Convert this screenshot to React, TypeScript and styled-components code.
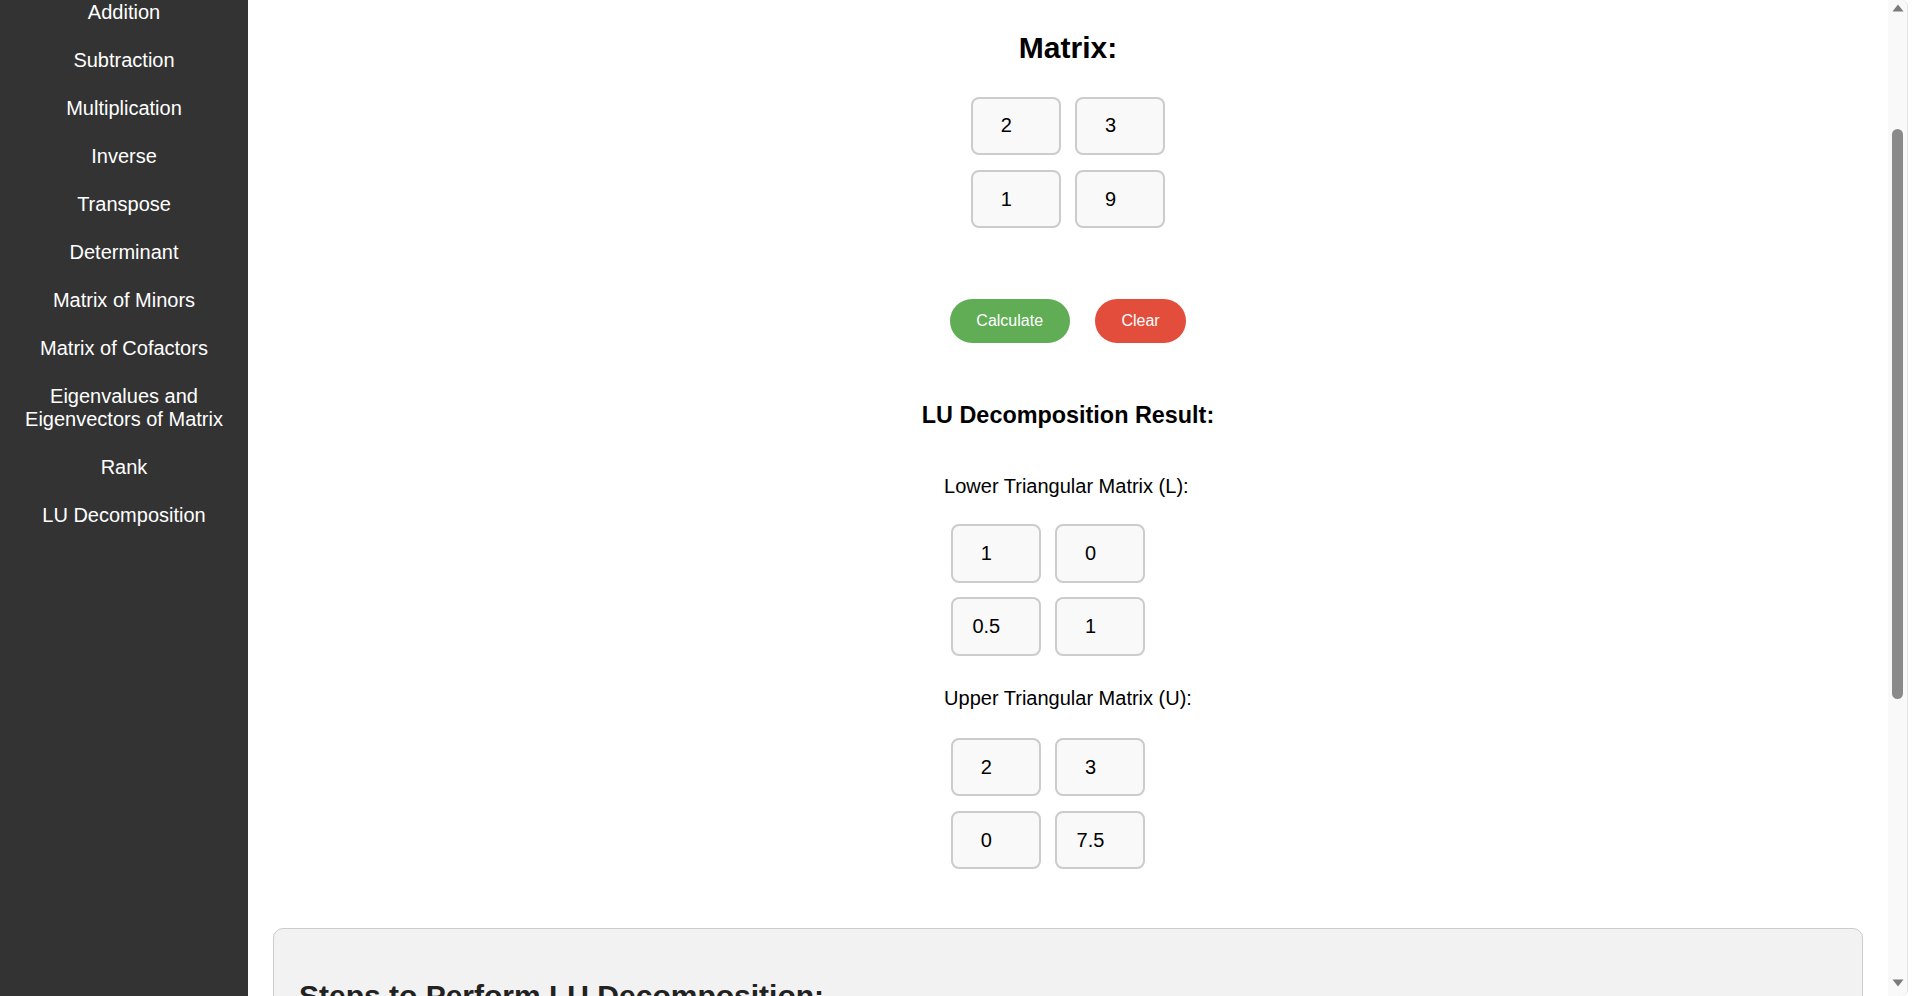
import React, { useLayoutEffect } from "react";
import styled, { createGlobalStyle } from "styled-components";

const GlobalStyle = createGlobalStyle`
  html, body {
    margin: 0;
    padding: 0;
  }
  body {
    font-family: "Liberation Sans", Arial, sans-serif;
    font-size: 20px;
    color: #000;
    background: #fff;
  }
`;

const Page = styled.div`
  display: flex;
  align-items: stretch;
  min-height: 100vh;
  padding-right: 17px;
`;

const Sidebar = styled.nav`
  width: 248px;
  flex-shrink: 0;
  background: #333;
  color: #fff;
  text-align: center;
`;

const SidebarTitle = styled.div`
  padding: 30px 10px;
  font-size: 26px;
  font-weight: bold;
  line-height: 30px;
`;

const NavList = styled.ul`
  list-style: none;
  margin: 0;
  padding: 0;
`;

const NavItem = styled.li`
  padding: 12.5px 10px;
  line-height: 23px;
`;

const NavLink = styled.a`
  color: #fff;
  text-decoration: none;
`;

const Main = styled.main`
  flex: 1;
  min-width: 0;
  padding: 0 32px 30px 25px;
  display: flex;
  flex-direction: column;
  align-items: center;
`;

const PageTitle = styled.h1`
  margin: 40px 0 0;
  font-size: 40px;
  line-height: 46px;
  text-align: center;
`;

const Lead = styled.p<{ $top: number }>`
  margin: ${(p) => p.$top}px 0 0;
  line-height: 23px;
  text-align: center;
  color: #333;
`;

const SectionTitle = styled.h2`
  margin: 66.7px 0 0;
  font-size: 30px;
  line-height: 34.5px;
  font-weight: bold;
`;

const Grid = styled.div<{ $top: number; $inset?: boolean }>`
  display: grid;
  grid-template-columns: repeat(2, 89.5px);
  gap: 14.8px 14.7px;
  margin-top: ${(p) => p.$top}px;
  padding-left: ${(p) => (p.$inset ? 7 : 0)}px;
`;

const Cell = styled.input`
  box-sizing: border-box;
  width: 89.5px;
  height: 58.4px;
  margin: 0;
  padding: 0 10px 0 6px;
  border: 2px solid #ccc;
  border-radius: 8px;
  background: #f9f9f9;
  font-family: "Liberation Sans", Arial, sans-serif;
  font-size: 20px;
  color: #000;
  text-align: center;
  outline: none;
`;

const ButtonRow = styled.div`
  display: flex;
  gap: 25px;
  margin-top: 70.4px;
`;

const ActionButton = styled.button<{ $variant: "primary" | "danger" }>`
  height: 44.4px;
  padding: 0 26.7px;
  border: none;
  border-radius: 22px;
  font-family: "Liberation Sans", Arial, sans-serif;
  font-size: 16px;
  color: #fff;
  cursor: pointer;
  background: ${(p) => (p.$variant === "danger" ? "#e34d3c" : "#60ad56")};
`;

const ResultTitle = styled.h3`
  margin: 59.1px 0 0;
  font-size: 23.4px;
  line-height: 26.9px;
  font-weight: bold;
`;

const ResultBlock = styled.div`
  margin-top: 45.6px;
  display: flex;
  flex-direction: column;
  align-items: flex-start;
`;

const MatrixLabel = styled.p<{ $top: number }>`
  margin: ${(p) => p.$top}px 0 0;
  line-height: 23px;
`;

const StepsBox = styled.section`
  align-self: stretch;
  margin-top: 58.2px;
  background: #f2f2f2;
  border: 1px solid #ccc;
  border-radius: 10px;
  padding: 25px;
`;

const StepsTitle = styled.h2`
  margin: 25px 0;
  font-size: 30px;
  line-height: 34.5px;
  color: #222;
`;

const StepList = styled.ol`
  margin: 0;
  padding-left: 30px;
`;

const Step = styled.li`
  line-height: 32px;
  margin-bottom: 16px;
  color: #333;
`;

const StepNote = styled.p`
  margin: 20px 0 0;
  line-height: 32px;
  color: #333;
`;

/* Window scrollbar as drawn in the screenshot (overlays the page edge) */
const ScrollTrack = styled.div`
  position: fixed;
  top: 0;
  bottom: 0;
  right: 4px;
  width: 19px;
  background: #f9f9f9;
  border-right: 1px solid #e4e4e4;
  border-radius: 0 6px 6px 0;
  z-index: 10;
`;

const ScrollThumb = styled.div`
  position: absolute;
  left: 4px;
  top: 129px;
  width: 11px;
  height: 570px;
  border-radius: 6px;
  background: #8a8a8a;
`;

const ScrollArrow = styled.svg<{ $down?: boolean }>`
  position: absolute;
  left: 3.5px;
  width: 12px;
  height: 8px;
  ${(p) => (p.$down ? "bottom: 9px;" : "top: 4px;")}
`;

const navItems = [
  "Home",
  "Matrix Calculator",
  "Addition",
  "Subtraction",
  "Multiplication",
  "Inverse",
  "Transpose",
  "Determinant",
  "Matrix of Minors",
  "Matrix of Cofactors",
  "Eigenvalues and Eigenvectors of Matrix",
  "Rank",
  "LU Decomposition",
];

const inputMatrix = [
  ["2", "3"],
  ["1", "9"],
];
const lower = [
  ["1", "0"],
  ["0.5", "1"],
];
const upper = [
  ["2", "3"],
  ["0", "7.5"],
];

const steps = [
  "Start with a square matrix A that you want to decompose into a lower matrix L and an upper matrix U.",
  "Initialize L as the identity matrix and U as a copy of A.",
  "For each pivot column k, compute the multipliers l(i,k) = u(i,k) / u(k,k) for every row i below the pivot.",
  "Subtract l(i,k) times row k from row i of U to eliminate the entries below the pivot.",
  "Store each multiplier l(i,k) in the matching position of L.",
  "Repeat for the next column until U is upper triangular.",
];

function MatrixView({ data, top, inset }: { data: string[][]; top: number; inset?: boolean }) {
  return (
    <Grid $top={top} $inset={inset}>
      {data.flat().map((v, i) => (
        <Cell key={i} type="number" value={v} readOnly />
      ))}
    </Grid>
  );
}

export default function App() {
  useLayoutEffect(() => {
    window.scrollTo(0, 198);
    const t = setTimeout(() => window.scrollTo(0, 198), 0);
    return () => clearTimeout(t);
  }, []);

  return (
    <>
      <GlobalStyle />
      <Page>
        <Sidebar>
          <SidebarTitle>Matrix Tools</SidebarTitle>
          <NavList>
            {navItems.map((item) => (
              <NavItem key={item}>
                <NavLink href="#">{item}</NavLink>
              </NavItem>
            ))}
          </NavList>
        </Sidebar>
        <Main>
          <PageTitle>LU Decomposition Calculator</PageTitle>
          <Lead $top={20}>Decompose a square matrix into a lower and an upper triangular matrix.</Lead>
          <Lead $top={10}>Enter the elements of your matrix and press Calculate.</Lead>

          <SectionTitle>Matrix:</SectionTitle>
          <MatrixView data={inputMatrix} top={31.5} />

          <ButtonRow>
            <ActionButton $variant="primary">Calculate</ActionButton>
            <ActionButton $variant="danger">Clear</ActionButton>
          </ButtonRow>

          <ResultTitle>LU Decomposition Result:</ResultTitle>
          <ResultBlock>
            <MatrixLabel $top={0}>Lower Triangular Matrix (L):</MatrixLabel>
            <MatrixView data={lower} top={26.5} inset />
            <MatrixLabel $top={31.6}>Upper Triangular Matrix (U):</MatrixLabel>
            <MatrixView data={upper} top={27.5} inset />
          </ResultBlock>

          <StepsBox>
            <StepsTitle>Steps to Perform LU Decomposition:</StepsTitle>
            <StepList>
              {steps.map((s) => (
                <Step key={s}>{s}</Step>
              ))}
            </StepList>
            <StepNote>When every column is processed, the original matrix satisfies A = L × U.</StepNote>
            <StepNote>Note: if a pivot is zero, rows must be swapped first (LU decomposition with partial pivoting).</StepNote>
          </StepsBox>
        </Main>
      </Page>
      <ScrollTrack aria-hidden="true">
        <ScrollArrow viewBox="0 0 12 8">
          <path d="M6 0.5 L11.5 7.5 L0.5 7.5 Z" fill="#7b7b7b" />
        </ScrollArrow>
        <ScrollThumb />
        <ScrollArrow $down viewBox="0 0 12 8">
          <path d="M0.5 0.5 L11.5 0.5 L6 7.5 Z" fill="#7b7b7b" />
        </ScrollArrow>
      </ScrollTrack>
    </>
  );
}
